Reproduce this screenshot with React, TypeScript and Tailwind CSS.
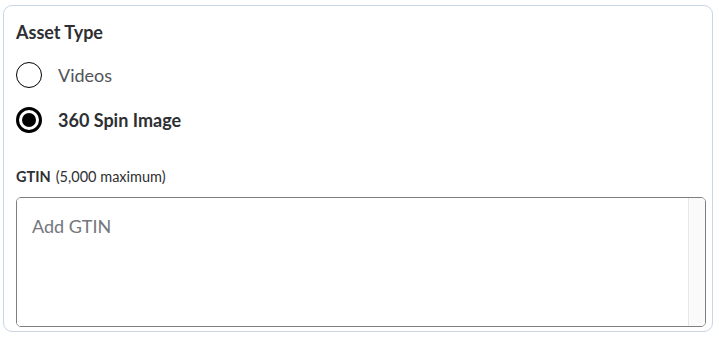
import React, { useState } from 'react';

const options = [
  { id: 'videos', label: 'Videos' },
  { id: 'spin', label: '360 Spin Image' },
];

const Radio = ({ checked }: { checked: boolean }) =>
  checked ? (
    <span className="flex h-[26px] w-[26px] shrink-0 items-center justify-center rounded-full border-[3px] border-black bg-white">
      <span className="h-[14px] w-[14px] rounded-full bg-black" />
    </span>
  ) : (
    <span className="h-[26px] w-[26px] shrink-0 rounded-full border-[1.5px] border-black bg-white" />
  );

export default function App() {
  const [assetType, setAssetType] = useState('spin');
  const [gtin, setGtin] = useState('');

  return (
    <div
      className="min-h-screen bg-white pl-[3px] pt-[5px] text-[#2e2f32]"
      style={{ fontFamily: 'Lato, "Noto Sans", sans-serif' }}
    >
      <div className="flex h-[327px] w-[710px] flex-col rounded-[9px] border border-[#c9d6e3] pl-[12px] pr-[6px] pt-[14px]">
        {/* Asset type */}
        <h3 className="text-[18px] font-bold leading-[24px] text-[#2e2f32]">Asset Type</h3>
        <div className="mt-[18px] flex flex-col gap-[19px]">
          {options.map((o) => (
            <label
              key={o.id}
              className="flex cursor-pointer items-center gap-[16px]"
              onClick={() => setAssetType(o.id)}
            >
              <Radio checked={assetType === o.id} />
              <span
                className={`text-[18px] leading-[26px] ${
                  assetType === o.id ? 'font-bold text-[#2e2f32]' : 'text-[#515357]'
                }`}
              >
                {o.label}
              </span>
            </label>
          ))}
        </div>

        {/* GTIN */}
        <div className="mt-[34px] text-[14.5px] leading-[20px] text-[#2e2f32]">
          <span className="font-bold">GTIN</span>
          <span className="ml-[5px]">(5,000 maximum)</span>
        </div>
        <div className="mt-[10px] flex h-[130px] overflow-hidden rounded-[5px] border border-[#7d7e82] shadow-[inset_0_1px_1px_rgba(0,0,0,0.08)]">
          <textarea
            value={gtin}
            onChange={(e) => setGtin(e.target.value)}
            placeholder="Add GTIN"
            className="h-full flex-1 resize-none bg-white px-[15px] pt-[16px] text-[18px] leading-[24px] text-[#2e2f32] outline-none placeholder:text-[#74767c]"
          />
          <div className="w-[17px] border-l border-[#e8e8e8] bg-[#fafafa]" />
        </div>
      </div>
    </div>
  );
}
